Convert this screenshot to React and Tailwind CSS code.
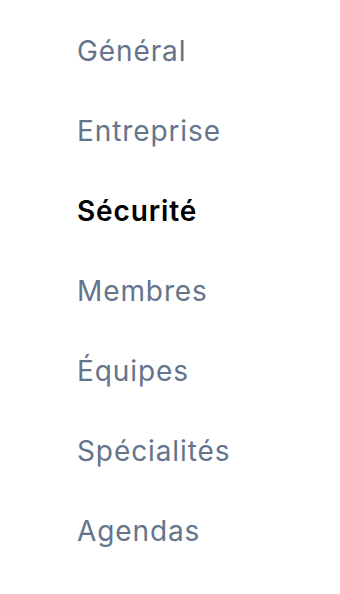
import { useState } from 'react';

const App = () => {
  const [active, setActive] = useState('Sécurité');

  const items = ['Général', 'Entreprise', 'Sécurité', 'Membres', 'Équipes', 'Spécialités', 'Agendas'];

  return (
    <div className="bg-white min-h-screen" style={{ fontFamily: 'Inter, "Noto Sans", sans-serif' }}>
      <nav className="flex flex-col gap-10 pt-[31px] pl-[77px]">
        {items.map(item => (
          <a
            key={item}
            href="#"
            onClick={(e) => { e.preventDefault(); setActive(item); }}
            className={`text-[28px] leading-[40px] tracking-[0.9px] ${
              active === item ? 'text-black font-semibold' : 'text-[#64748b]'
            }`}
          >
            {item}
          </a>
        ))}
      </nav>
    </div>
  );
};

export default App;
